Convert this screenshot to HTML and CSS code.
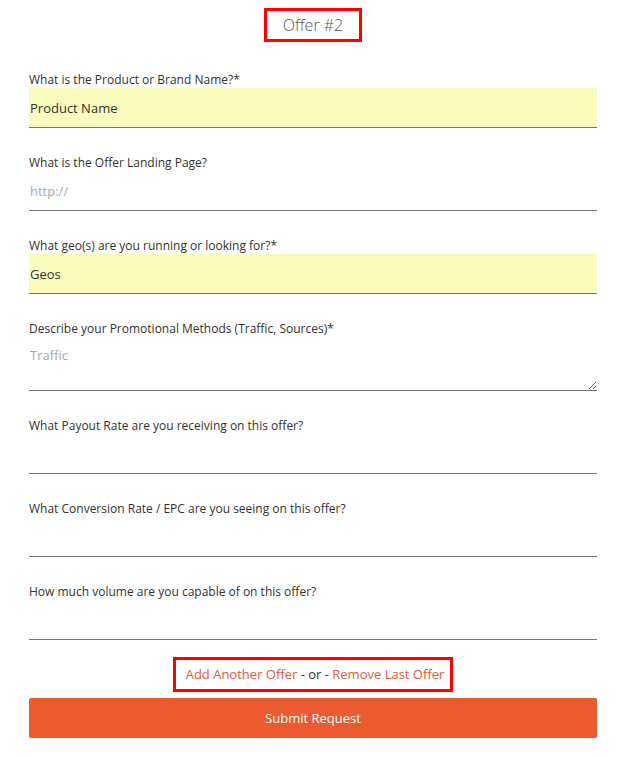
FILE: index.html
```html
<!DOCTYPE html>
<html>
<head>
<meta charset="utf-8">
<link rel="stylesheet" href="styles.css">
</head>
<body>
<form class="page">
  <div class="title-row"><h2 class="title">Offer #2</h2></div>

  <div class="group">
    <label class="label">What is the Product or Brand Name?*</label>
    <input class="field required" type="text" placeholder="Product Name">
  </div>

  <div class="group">
    <label class="label">What is the Offer Landing Page?</label>
    <input class="field" type="text" placeholder="http://">
  </div>

  <div class="group">
    <label class="label">What geo(s) are you running or looking for?*</label>
    <input class="field required" type="text" placeholder="Geos">
  </div>

  <div class="group">
    <label class="label">Describe your Promotional Methods (Traffic, Sources)*</label>
    <textarea class="field area" placeholder="Traffic"></textarea>
  </div>

  <div class="group">
    <label class="label">What Payout Rate are you receiving on this offer?</label>
    <input class="field" type="text">
  </div>

  <div class="group">
    <label class="label">What Conversion Rate / EPC are you seeing on this offer?</label>
    <input class="field" type="text">
  </div>

  <div class="group">
    <label class="label">How much volume are you capable of on this offer?</label>
    <input class="field" type="text">
  </div>

  <div class="links-row">
    <span class="links"><a class="link">Add Another Offer</a> - or - <a class="link">Remove Last Offer</a></span>
  </div>

  <button class="submit" type="button">Submit Request</button>
</form>
</body>
</html>
```

FILE: styles.css
```css
html, body {
  margin: 0;
  padding: 0;
  background: #fff;
}
body {
  font-family: "Open Sans", "Liberation Sans", sans-serif;
  color: #333;
}
.page {
  display: block;
  padding: 8px 27px 0 29px;
}
.title-row {
  display: flex;
  justify-content: center;
  margin-bottom: 28px;
}
.title {
  margin: 0;
  font-size: 16px;
  font-weight: 300;
  color: #555;
  line-height: 20px;
  padding: 4px 14px 4px 14px;
  border: 3px solid #f00;
  width: 64px;
  text-align: center;
}
.group {
  display: flex;
  flex-direction: column;
  margin-bottom: 25px;
}
.label {
  font-size: 12px;
  line-height: 17px;
  padding-top: 1px;
  color: #333;
}
.field {
  box-sizing: border-box;
  height: 40px;
  width: 100%;
  margin: 0;
  padding: 0 1px;
  border: none;
  border-bottom: 1px solid #777;
  background: #fff;
  font-family: "Open Sans", "Liberation Sans", sans-serif;
  font-size: 13px;
  color: #333;
  outline: none;
}
.field::placeholder {
  color: #aaa;
}
.field.required {
  background: #fafcbe;
}
.field.required::placeholder {
  color: #333;
}
.area {
  height: 54px;
  padding-top: 9px;
  resize: vertical;
  line-height: 18px;
  display: block;
}
.links-row {
  display: flex;
  justify-content: center;
  margin-top: -8px;
  margin-bottom: 6px;
}
.links {
  display: inline-block;
  border: 3px solid #f00;
  padding: 5px 6px 5px 10px;
  font-size: 13px;
  line-height: 19px;
  color: #333;
}
.link {
  color: #e8553a;
  cursor: pointer;
}
.submit {
  display: block;
  width: 100%;
  height: 40px;
  border: none;
  border-radius: 2px;
  background: #ec5a2f;
  color: #fff;
  font-family: "Open Sans", "Liberation Sans", sans-serif;
  font-size: 13px;
  cursor: pointer;
}
```
